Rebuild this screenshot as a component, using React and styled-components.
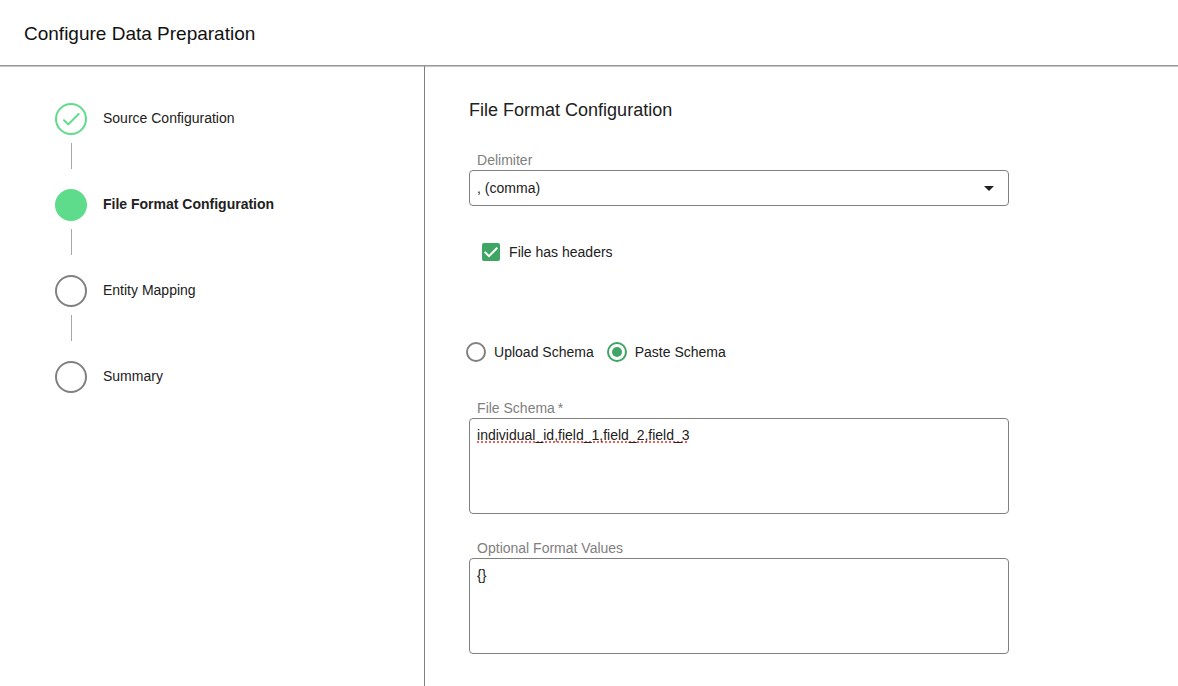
import React, { useState } from "react";
import styled, { createGlobalStyle, css } from "styled-components";

const GlobalStyle = createGlobalStyle`
  *, *::before, *::after { box-sizing: border-box; }
  body {
    margin: 0;
    background: #fff;
    color: #212121;
    font: 14px/20px "Liberation Sans", Arial, Helvetica, sans-serif;
  }
`;

const Page = styled.div`
  display: flex;
  flex-direction: column;
  min-height: 100vh;
`;

const Header = styled.header`
  padding: 22px 24px 19px;
  border-bottom: 1px solid #9a9a9a;
  box-shadow: 0 1px 0 #c4c4c4;
`;

const PageTitle = styled.h1`
  margin: 0;
  color: #111;
  font-size: 19px;
  line-height: 24px;
  font-weight: 400;
`;

const Body = styled.div`
  display: flex;
  flex: 1;
`;

const Sidebar = styled.nav`
  flex: 0 0 36%;
  padding: 37px 24px 24px 55px;
`;

const StepList = styled.ol`
  margin: 0;
  padding: 0;
  list-style: none;
`;

const Step = styled.li`
  display: grid;
  grid-template-columns: 32px 1fr;
  column-gap: 16px;
  row-gap: 8px;
  padding-bottom: 20px;

  &:not(:last-child)::after {
    content: "";
    width: 1px;
    height: 26px;
    margin-left: 16px;
    background: #a8a8a8;
  }
`;

const markerStates = {
  done: css`border-color: #5edc8b;`,
  active: css`border-color: #5edc8b; background: #5edc8b;`,
  todo: css`border-color: #808080;`,
};

const StepMarker = styled.span`
  display: flex;
  align-items: center;
  justify-content: center;
  height: 32px;
  border: 2px solid;
  border-radius: 50%;
  ${({ $state }) => markerStates[$state]}
`;

const StepLabel = styled.span`
  line-height: 30px;
  font-weight: ${({ $state }) => ($state === "active" ? 700 : 400)};
`;

const Content = styled.main`
  flex: 1;
  min-width: 0;
  padding: 32px 44px;
  border-left: 1px solid #808080;
`;

const Form = styled.form`
  display: flex;
  flex-direction: column;
  max-width: 540px;
`;

const SectionTitle = styled.h2`
  margin: 0 0 28px;
  font-size: 18px;
  line-height: 24px;
  font-weight: 400;
`;

const Field = styled.div`
  display: flex;
  flex-direction: column;

  & + & { margin-top: 24px; }
`;

const FieldLabel = styled.label`
  padding: 0 8px;
  color: #808080;
`;

const control = css`
  width: 100%;
  margin: 0;
  border: 1px solid #808080;
  border-radius: 4px;
  background: #fff;
  color: #212121;
  font: inherit;
`;

const SelectBox = styled.div`
  display: grid;
  align-items: center;

  & > * { grid-area: 1 / 1; }
`;

const Select = styled.select`
  ${control}
  height: 36px;
  padding: 0 32px 0 7px;
  appearance: none;
`;

const Arrow = styled.svg`
  justify-self: end;
  margin-right: 15px;
  pointer-events: none;
`;

const TextArea = styled.textarea`
  ${control}
  display: block;
  height: 96px;
  padding: 6px 7px;
  resize: none;
  ${({ $marked }) =>
    $marked &&
    css`
      text-decoration: underline dotted #f0625a 2px;
      text-decoration-skip-ink: none;
      text-underline-offset: 1px;
    `}
`;

const CheckRow = styled.label`
  display: flex;
  align-items: center;
  gap: 9px;
  margin: 36px 13px 80px;
`;

const CheckBox = styled.span`
  display: grid;
  width: 18px;
  height: 18px;

  & > * { grid-area: 1 / 1; }
  svg { pointer-events: none; }
`;

const CheckInput = styled.input`
  width: 18px;
  height: 18px;
  margin: 0;
  appearance: none;
  border: 2px solid #808080;
  border-radius: 2px;

  &:checked { border-color: #3fa565; background: #3fa565; }
`;

const RadioGroup = styled.div`
  display: flex;
  flex-wrap: wrap;
  gap: 13px;
  margin: 0 -3px 36px;
`;

const RadioLabel = styled.label`
  display: flex;
  align-items: center;
  gap: 8px;
`;

const RadioInput = styled.input`
  width: 20px;
  height: 20px;
  margin: 0;
  appearance: none;
  border: 2px solid #808080;
  border-radius: 50%;

  &:checked {
    padding: 3px;
    border-color: #3fa565;
    background: #3fa565 content-box;
  }
`;

const steps = [
  { label: "Source Configuration", state: "done" },
  { label: "File Format Configuration", state: "active" },
  { label: "Entity Mapping", state: "todo" },
  { label: "Summary", state: "todo" },
];

export default function App() {
  const [headers, setHeaders] = useState(true);
  const [mode, setMode] = useState("paste");

  return (
    <Page>
      <GlobalStyle />
      <Header>
        <PageTitle>Configure Data Preparation</PageTitle>
      </Header>
      <Body>
        <Sidebar>
          <StepList>
            {steps.map(({ label, state }) => (
              <Step key={label}>
                <StepMarker $state={state}>
                  {state === "done" && (
                    <svg width="28" height="28" viewBox="0 0 28 28" fill="none" stroke="#5edc8b" strokeWidth="2" strokeLinecap="round" strokeLinejoin="round">
                      <path d="M7 15.2 L11.3 19.4 L21.6 9" />
                    </svg>
                  )}
                </StepMarker>
                <StepLabel $state={state}>{label}</StepLabel>
              </Step>
            ))}
          </StepList>
        </Sidebar>
        <Content>
          <Form>
            <SectionTitle>File Format Configuration</SectionTitle>
            <Field>
              <FieldLabel htmlFor="delimiter">Delimiter</FieldLabel>
              <SelectBox>
                <Select id="delimiter" defaultValue="comma">
                  <option value="comma">, (comma)</option>
                </Select>
                <Arrow width="10" height="5" viewBox="0 0 10 5" fill="#212121">
                  <path d="M0 0H10L5 5Z" />
                </Arrow>
              </SelectBox>
            </Field>
            <CheckRow>
              <CheckBox>
                <CheckInput type="checkbox" checked={headers} onChange={() => setHeaders(!headers)} />
                {headers && (
                  <svg width="18" height="18" viewBox="0 0 18 18" fill="none" stroke="#fff" strokeWidth="2">
                    <path d="M2.7 8.9 L7 13.1 L15.3 4.7" />
                  </svg>
                )}
              </CheckBox>
              File has headers
            </CheckRow>
            <RadioGroup role="radiogroup" aria-label="Schema source">
              <RadioLabel>
                <RadioInput type="radio" name="mode" checked={mode === "upload"} onChange={() => setMode("upload")} />
                Upload Schema
              </RadioLabel>
              <RadioLabel>
                <RadioInput type="radio" name="mode" checked={mode === "paste"} onChange={() => setMode("paste")} />
                Paste Schema
              </RadioLabel>
            </RadioGroup>
            <Field>
              <FieldLabel htmlFor="schema">File Schema&#8201;*</FieldLabel>
              <TextArea id="schema" $marked spellCheck={false} defaultValue="individual_id,field_1,field_2,field_3" />
            </Field>
            <Field>
              <FieldLabel htmlFor="format">Optional Format Values</FieldLabel>
              <TextArea id="format" spellCheck={false} defaultValue="{}" />
            </Field>
          </Form>
        </Content>
      </Body>
    </Page>
  );
}
